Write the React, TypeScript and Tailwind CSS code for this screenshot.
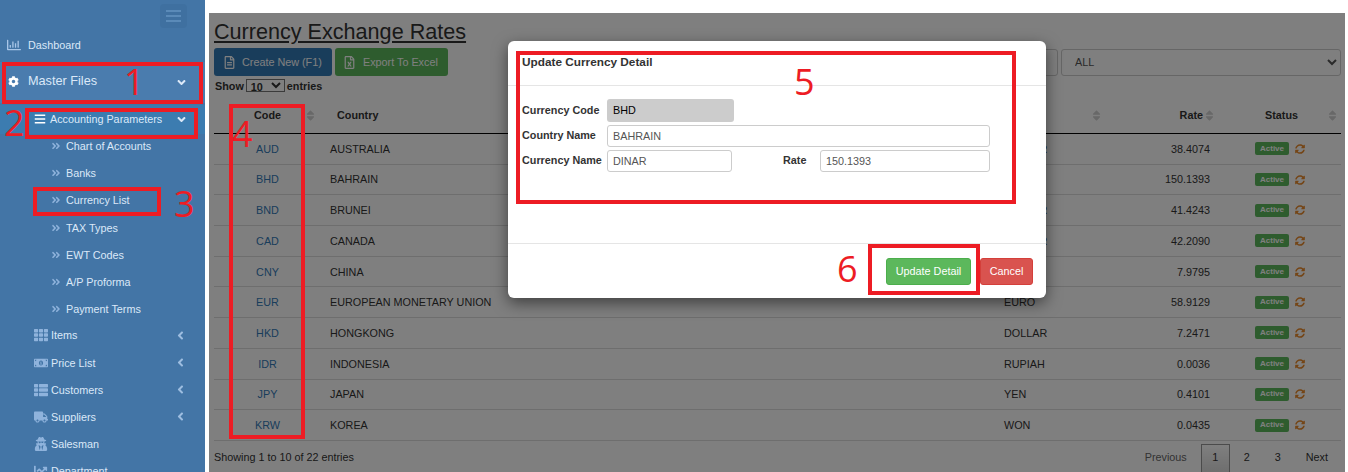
import React from 'react';
import {
  FaAngleDoubleRight,
  FaAngleDown,
  FaAngleLeft,
  FaBars,
  FaChartLine,
  FaCog,
  FaMoneyBillAlt,
  FaRegChartBar,
  FaRegFileAlt,
  FaRegFileExcel,
  FaSort,
  FaSyncAlt,
  FaTh,
  FaThList,
  FaTruck,
  FaUserSecret,
} from 'react-icons/fa';

const subItems = ['Chart of Accounts', 'Banks', 'Currency List', 'TAX Types', 'EWT Codes', 'A/P Proforma', 'Payment Terms'];

const lowerItems = [
  { label: 'Items', icon: FaTh, arrow: true },
  { label: 'Price List', icon: FaMoneyBillAlt, arrow: true },
  { label: 'Customers', icon: FaThList, arrow: true },
  { label: 'Suppliers', icon: FaTruck, arrow: true },
  { label: 'Salesman', icon: FaUserSecret, arrow: false },
  { label: 'Department', icon: FaChartLine, arrow: false },
];

const rates = [
  ['AUD', 'AUSTRALIA', 'DOLLAR', '38.4074'],
  ['BHD', 'BAHRAIN', 'DINAR', '150.1393'],
  ['BND', 'BRUNEI', 'DOLLAR', '41.4243'],
  ['CAD', 'CANADA', 'DOLLAR', '42.2090'],
  ['CNY', 'CHINA', 'YUAN', '7.9795'],
  ['EUR', 'EUROPEAN MONETARY UNION', 'EURO', '58.9129'],
  ['HKD', 'HONGKONG', 'DOLLAR', '7.2471'],
  ['IDR', 'INDONESIA', 'RUPIAH', '0.0036'],
  ['JPY', 'JAPAN', 'YEN', '0.4101'],
  ['KRW', 'KOREA', 'WON', '0.0435'],
];

function Sidebar() {
  return (
    <aside className="w-[205px] h-[472px] shrink-0 overflow-hidden bg-[#4375a6] text-[10.8px] text-[#dbe8f8]">
      <div className="flex justify-end pt-1 pr-[18px]">
        <div className="flex h-[24px] w-[27px] flex-col items-center justify-center gap-[3px] rounded-sm bg-[#3f70a0]">
          <div className="h-[2px] w-[15px] bg-[#5a8ab8]" />
          <div className="h-[2px] w-[15px] bg-[#5a8ab8]" />
          <div className="h-[2px] w-[15px] bg-[#5a8ab8]" />
        </div>
      </div>
      <div className="flex h-[34px] items-center pl-[7px]">
        <FaRegChartBar size={14} className="text-[#a9c6e8]" />
        <span className="ml-[7px]">Dashboard</span>
      </div>
      <div className="flex h-[41px] items-center bg-[#4a7cae] pl-[8px] pr-[17px]">
        <FaCog size={11} className="-translate-y-[1px] text-white" />
        <span className="ml-[9px] -translate-y-[1.5px] text-[12.7px]">Master Files</span>
        <FaAngleDown size={13} className="ml-auto" />
      </div>
      <div className="mt-[2px] flex h-[29px] items-center bg-[#3c7cb0] pl-[34px] pr-[17px]">
        <FaBars size={12} className="-translate-y-[1px] text-white" />
        <span className="ml-[4px]">Accounting Parameters</span>
        <FaAngleDown size={13} className="ml-auto" />
      </div>
      <div className="-mt-[1.5px]">
        {subItems.map((item) => (
          <div key={item} className="flex h-[27.2px] items-center pl-[51px]">
            <FaAngleDoubleRight size={10} className="text-[#8fb3dc]" />
            <span className="ml-[5px]">{item}</span>
          </div>
        ))}
      </div>
      <div className="-mt-[1px]">
        {lowerItems.map(({ label, icon: Icon, arrow }) => (
          <div key={label} className="flex h-[27.2px] items-center pl-[33px] pr-[18px]">
            <span className="flex w-[15px] justify-center">
              <Icon size={14} className="text-[#8fb3dc]" />
            </span>
            <span className="ml-[3px]">{label}</span>
            {arrow && <FaAngleLeft size={13} className="ml-auto text-[#9dbde0]" />}
          </div>
        ))}
      </div>
    </aside>
  );
}

function Sort({ className }: { className: string }) {
  return <FaSort size={13} className={`shrink-0 text-[#d0d0d0] ${className}`} />;
}

function RatesPage() {
  return (
    <main className="relative mt-[13px] ml-[4px] h-[459px] w-[1136px] overflow-hidden bg-white pl-[5px] pr-[4px] text-[10.8px] text-[#333333]">
      <h1 className="mt-[6px] text-[21.6px] leading-[26px] underline">Currency Exchange Rates</h1>
      <div className="mt-[3px] flex items-center">
        <button className="flex h-[28px] w-[118px] items-center gap-[6px] rounded-[3px] bg-[#337ab7] pl-[9px] text-white">
          <FaRegFileAlt size={13} /> Create New (F1)
        </button>
        <button className="ml-[3px] flex h-[28px] w-[113px] items-center gap-[7px] rounded-[3px] bg-[#5cb85c] pl-[8px] text-white">
          <FaRegFileExcel size={13} /> Export To Excel
        </button>
        <input readOnly className="ml-auto mr-[3px] h-[27px] w-[60px] rounded-[3px] border border-[#cccccc]" />
        <select className="h-[27px] w-[280px] rounded-[3px] border border-[#cccccc] pl-[9px] text-[#555555]">
          <option>ALL</option>
        </select>
      </div>
      <div className="mt-[2px] flex h-[16px] items-center gap-[2px] pl-[1px] font-bold">
        <span>Show</span>
        <select className="h-[13px] w-[39px] -translate-y-[1px] border border-[#767676] font-bold">
          <option>10</option>
        </select>
        <span>entries</span>
      </div>
      <div className="mt-[5px] flex h-[35px] items-center border-b border-black pb-[2px] font-bold">
        <span className="ml-[40px] w-[50px]">Code</span>
        <Sort className="" />
        <span className="ml-[20px] w-[753px]">Country</span>
        <Sort className="" />
        <span className="ml-[69px] w-[31px] text-right">Rate</span>
        <Sort className="" />
        <span className="ml-[49px] w-[31px]">Status</span>
        <Sort className="ml-[30px]" />
      </div>
      {rates.map(([code, country, currency, rate]) => (
        <div key={code} className="flex h-[30.7px] items-center border-b border-[#dddddd] last:border-black">
          <span className="w-[107px] text-center text-[#337ab7]">{code}</span>
          <span className="ml-[9px] w-[674px]">{country}</span>
          <span className="w-[120px]">{currency}</span>
          <span className="w-[86px] text-right">{rate}</span>
          <span className="ml-[45px] flex h-[13px] w-[34px] items-center justify-center rounded-[2px] bg-[#5cb85c] text-[8px] font-bold text-white">Active</span>
          <FaSyncAlt size={10} className="ml-[6px] text-[#e98b2d]" />
        </div>
      ))}
      <div className="mt-[3px] flex h-[30px] items-start">
        <span className="mt-[5px]">Showing 1 to 10 of 22 entries</span>
        <div className="ml-auto mr-[13px] flex items-center">
          <span className="mr-[14px] -translate-y-[2px] text-[#666666]">Previous</span>
          <span className="flex h-[30px] w-[29px] items-center justify-center border border-[#979797] bg-gradient-to-b from-white to-[#dcdcdc] pb-[4px]">1</span>
          <span className="ml-[14px] -translate-y-[2px]">2</span>
          <span className="ml-[25px] -translate-y-[2px]">3</span>
          <span className="ml-[25px] -translate-y-[2px]">Next</span>
        </div>
      </div>
      {/* modal backdrop */}
      <div className="absolute inset-0 bg-black/50" />
    </main>
  );
}

function Field({ value, className }: { value: string; className: string }) {
  return (
    <input
      readOnly
      value={value}
      className={`h-[22px] rounded-[3px] border border-[#cccccc] pl-[5px] text-[10.8px] text-[#555555] ${className}`}
    />
  );
}

function DetailModal() {
  return (
    <div className="absolute left-[508px] top-[41px] flex h-[257px] w-[538px] flex-col rounded-[6px] bg-white text-[10.8px] text-[#333333] shadow-[0_5px_15px_rgba(0,0,0,0.5)]">
      <div className="h-[45px] border-b border-[#e5e5e5] px-[14px] pt-[13px] text-[11.8px] font-bold">Update Currency Detail</div>
      <div className="h-[158px] border-b border-[#e5e5e5] pl-[14px] pt-[13px] font-bold">
        <div className="flex h-[23px] items-center">
          <span className="w-[85px]">Currency Code</span>
          <div className="flex h-[23px] w-[127px] items-center rounded-[3px] bg-[#cccccc] pl-[6px] font-normal text-black">BHD</div>
        </div>
        <div className="mt-[2px] flex h-[23px] items-center">
          <span className="w-[85px]">Country Name</span>
          <Field value="BAHRAIN" className="w-[383px] font-normal" />
        </div>
        <div className="mt-[2px] flex h-[23px] items-center">
          <span className="w-[85px]">Currency Name</span>
          <Field value="DINAR" className="w-[125px] font-normal" />
          <span className="ml-[51px] w-[37px]">Rate</span>
          <Field value="150.1393" className="w-[170px] font-normal" />
        </div>
      </div>
      <div className="flex flex-1 items-center justify-end gap-[9px] pr-[13px] text-white">
        <button className="h-[27px] w-[85px] rounded-[3px] bg-[#5cb85c] border border-[#4cae4c]">Update Detail</button>
        <button className="h-[27px] w-[53px] rounded-[3px] bg-[#d9534f] border border-[#d43f3a]">Cancel</button>
      </div>
    </div>
  );
}

// hand-drawn red markers on top of the screenshot
const boxes = [
  'left-[2px] top-[62px] w-[201px] h-[42px]',
  'left-[25px] top-[108px] w-[173px] h-[31px]',
  'left-[33px] top-[187px] w-[128px] h-[29px]',
  'left-[229px] top-[104px] w-[76px] h-[335px]',
  'left-[516px] top-[51px] w-[500px] h-[153px]',
  'left-[868px] top-[244px] w-[112px] h-[51px]',
];

const numbers = [
  { text: '1', className: 'left-[124px] top-[60px]' },
  { text: '2', className: 'left-[4px] top-[101px]' },
  { text: '3', className: 'left-[174px] top-[182px]' },
  { text: '4', className: 'left-[232px] top-[112px]' },
  { text: '5', className: 'left-[794px] top-[60px]' },
  { text: '6', className: 'left-[837px] top-[247px]' },
];

export default function App() {
  return (
    <div className="relative flex h-[472px] w-[1348px] overflow-hidden bg-white font-['Liberation_Sans',sans-serif]">
      <Sidebar />
      <RatesPage />
      <DetailModal />
      {boxes.map((box) => (
        <div key={box} className={`absolute border-[4px] border-[#ed1c24] ${box}`} />
      ))}
      {numbers.map((n) => (
        <span key={n.text} className={`absolute font-['Open_Sans',sans-serif] text-[36px] leading-[44px] text-[#ed1c24] ${n.className}`}>
          {n.text}
        </span>
      ))}
    </div>
  );
}
